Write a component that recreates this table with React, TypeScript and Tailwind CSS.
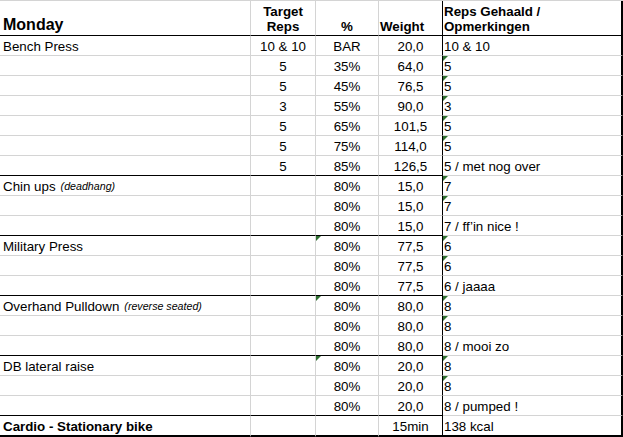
import type { ReactNode } from 'react';

type Row = {
  a?: ReactNode;
  b?: string;
  c?: string;
  d?: string;
  e?: string;
  flagC?: boolean; // green error marker, % column
  flagE?: boolean; // green error marker, reps column
  sep?: boolean;   // black line under the row (A–D)
};

const rows: Row[] = [
  { a: 'Bench Press', b: '10 & 10', c: 'BAR', d: '20,0', e: '10 & 10' },
  { b: '5', c: '35%', d: '64,0', e: '5', flagE: true },
  { b: '5', c: '45%', d: '76,5', e: '5', flagE: true },
  { b: '3', c: '55%', d: '90,0', e: '3', flagE: true },
  { b: '5', c: '65%', d: '101,5', e: '5', flagE: true },
  { b: '5', c: '75%', d: '114,0', e: '5', flagE: true },
  { b: '5', c: '85%', d: '126,5', e: '5 / met nog over', sep: true },
  {
    a: (
      <>
        Chin ups<span className="ml-[5px] text-[10.67px] italic">(deadhang)</span>
      </>
    ),
    c: '80%', d: '15,0', e: '7', flagE: true,
  },
  { c: '80%', d: '15,0', e: '7', flagE: true },
  { c: '80%', d: '15,0', e: '7 / ff\u2019in nice !', sep: true },
  { a: 'Military Press', c: '80%', d: '77,5', e: '6', flagC: true, flagE: true },
  { c: '80%', d: '77,5', e: '6', flagE: true },
  { c: '80%', d: '77,5', e: '6 / jaaaa', sep: true },
  {
    a: (
      <>
        Overhand Pulldown<span className="ml-[5px] text-[10.67px] italic">(reverse seated)</span>
      </>
    ),
    c: '80%', d: '80,0', e: '8', flagC: true, flagE: true,
  },
  { c: '80%', d: '80,0', e: '8', flagE: true },
  { c: '80%', d: '80,0', e: '8 / mooi zo', sep: true },
  { a: 'DB lateral raise', c: '80%', d: '20,0', e: '8', flagC: true, flagE: true },
  { c: '80%', d: '20,0', e: '8', flagE: true },
  { c: '80%', d: '20,0', e: '8 / pumped !', sep: true },
];

function Flag() {
  return (
    <span className="absolute left-0 top-0 h-0 w-0 border-t-[5px] border-r-[5px] border-t-[#2e6f30] border-r-transparent" />
  );
}

export default function App() {
  const cell = 'relative flex items-end pb-px leading-[15px] whitespace-nowrap';
  return (
    <div
      className="w-[623px] h-[437px] bg-white text-black text-[13.33px] overflow-hidden"
      style={{ fontFamily: '"Liberation Sans", Arial, sans-serif' }}
    >
      {/* header */}
      <div className="flex h-[36px] border-t border-[#d4d4d4] font-bold">
        <div className={`${cell} w-[251px] pl-[3px] border-r border-b border-r-[#d4d4d4] border-b-black pb-0`}>
          <span className="text-[16px] leading-[18px]">Monday</span>
        </div>
        <div className={`${cell} w-[65px] justify-center text-center border-r border-b border-r-[#d4d4d4] border-b-black`}>
          Target<br />Reps
        </div>
        <div className={`${cell} w-[63px] justify-center border-r border-b border-r-[#d4d4d4] border-b-black`}>%</div>
        <div className={`${cell} w-[64px] pl-[1px] border-r border-b border-black`}>Weight</div>
        <div className={`${cell} w-[180px] pl-[1px] border-r-2 border-b border-black`}>
          Reps Gehaald /<br />Opmerkingen
        </div>
      </div>

      {rows.map((r, i) => {
        const line = r.sep ? 'border-b-black' : 'border-b-[#d4d4d4]';
        return (
          <div key={i} className="flex h-[20px]">
            <div className={`${cell} w-[251px] pl-[3px] border-r border-b border-r-[#d4d4d4] ${line}`}>{r.a}</div>
            <div className={`${cell} w-[65px] justify-center border-r border-b border-r-[#d4d4d4] ${line}`}>{r.b}</div>
            <div className={`${cell} w-[63px] justify-center border-r border-b border-r-[#d4d4d4] ${line}`}>
              {r.flagC && <Flag />}
              {r.c}
            </div>
            <div className={`${cell} w-[64px] justify-center border-r border-b border-r-black ${line}`}>{r.d}</div>
            <div className={`${cell} w-[180px] pl-[1px] border-r-2 border-b border-r-black border-b-[#d4d4d4]`}>
              {r.flagE && <Flag />}
              {r.e}
            </div>
          </div>
        );
      })}

      {/* cardio */}
      <div className="flex h-[21px]">
        <div className={`${cell} w-[251px] pl-[3px] font-bold border-r border-b-2 border-r-[#d4d4d4] border-b-black`}>
          Cardio - Stationary bike
        </div>
        <div className={`${cell} w-[65px] border-r border-b-2 border-r-[#d4d4d4] border-b-black`} />
        <div className={`${cell} w-[63px] border-r border-b-2 border-r-[#d4d4d4] border-b-black`} />
        <div className={`${cell} w-[64px] justify-center border-r border-b-2 border-black`}>15min</div>
        <div className={`${cell} w-[180px] pl-[1px] border-r-2 border-b-2 border-black`}>138 kcal</div>
      </div>
    </div>
  );
}
